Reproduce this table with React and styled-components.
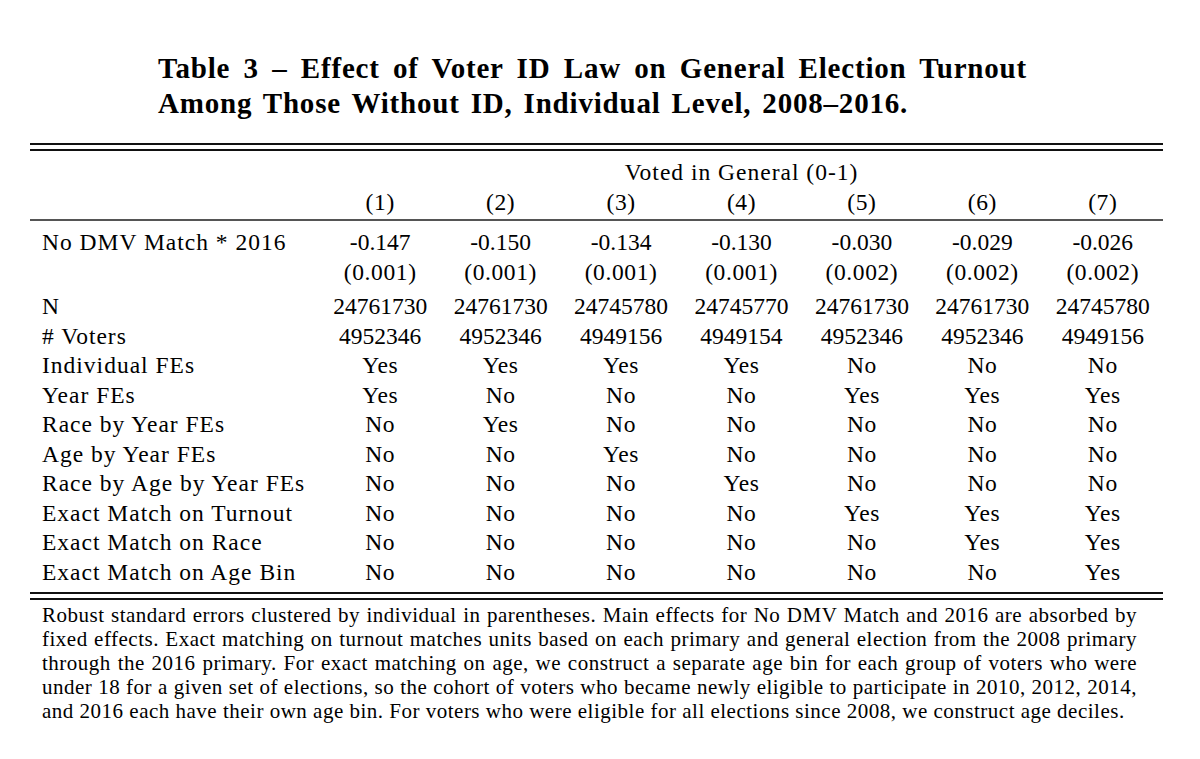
import React from 'react'
import styled, { createGlobalStyle } from 'styled-components'

const GlobalStyle = createGlobalStyle`
  html, body {
    margin: 0;
    padding: 0;
    background: #fff;
  }
  body {
    font-family: "Liberation Serif", "Times New Roman", serif;
    color: #000;
  }
`

const columns = ['(1)', '(2)', '(3)', '(4)', '(5)', '(6)', '(7)']

const coefs = ['-0.147', '-0.150', '-0.134', '-0.130', '-0.030', '-0.029', '-0.026']
const errors = ['(0.001)', '(0.001)', '(0.001)', '(0.001)', '(0.002)', '(0.002)', '(0.002)']

const stats = [
  { label: 'N', values: ['24761730', '24761730', '24745780', '24745770', '24761730', '24761730', '24745780'] },
  { label: '# Voters', values: ['4952346', '4952346', '4949156', '4949154', '4952346', '4952346', '4949156'] },
]

const Y = 'Yes'
const N = 'No'

const specs = [
  { label: 'Individual FEs', values: [Y, Y, Y, Y, N, N, N] },
  { label: 'Year FEs', values: [Y, N, N, N, Y, Y, Y] },
  { label: 'Race by Year FEs', values: [N, Y, N, N, N, N, N] },
  { label: 'Age by Year FEs', values: [N, N, Y, N, N, N, N] },
  { label: 'Race by Age by Year FEs', values: [N, N, N, Y, N, N, N] },
  { label: 'Exact Match on Turnout', values: [N, N, N, N, Y, Y, Y] },
  { label: 'Exact Match on Race', values: [N, N, N, N, N, Y, Y] },
  { label: 'Exact Match on Age Bin', values: [N, N, N, N, N, N, Y] },
]

const noteLines = [
  'Robust standard errors clustered by individual in parentheses. Main effects for No DMV Match and 2016 are absorbed by',
  'fixed effects. Exact matching on turnout matches units based on each primary and general election from the 2008 primary',
  'through the 2016 primary. For exact matching on age, we construct a separate age bin for each group of voters who were',
  'under 18 for a given set of elections, so the cohort of voters who became newly eligible to participate in 2010, 2012, 2014,',
  'and 2016 each have their own age bin. For voters who were eligible for all elections since 2008, we construct age deciles.',
]

const App = () => {
  return (
    <Page>
      <GlobalStyle />
      <Caption>
        <CaptionLine $justify>Table 3 – Effect of Voter ID Law on General Election Turnout</CaptionLine>
        <CaptionLine>Among Those Without ID, Individual Level, 2008–2016.</CaptionLine>
      </Caption>

      <Table>
        <DoubleRule />
        <Head>
          <Row>
            <Label />
            <SpanCell>Voted in General (0-1)</SpanCell>
          </Row>
          <Row>
            <Label />
            {columns.map((c) => (
              <Cell key={c}>{c}</Cell>
            ))}
          </Row>
        </Head>
        <MidRule />

        <Body>
          <Row>
            <Label>No DMV Match * 2016</Label>
            {coefs.map((v, i) => (
              <Cell key={i} $num>{v}</Cell>
            ))}
          </Row>
          <Row>
            <Label />
            {errors.map((v, i) => (
              <Cell key={i}>{v}</Cell>
            ))}
          </Row>
          <Spacer />
          {stats.concat(specs).map((row) => (
            <Row key={row.label}>
              <Label>{row.label}</Label>
              {row.values.map((v, i) => (
                <Cell key={i} $num={/\d/.test(v)}>{v}</Cell>
              ))}
            </Row>
          ))}
        </Body>

        <DoubleRule $bottom />

        <Note>
          {noteLines.map((line, i) => (
            <NoteLine key={i} $last={i === noteLines.length - 1}>{line}</NoteLine>
          ))}
        </Note>
      </Table>
    </Page>
  )
}

const Page = styled.main`
  width: 1200px;
  min-height: 759px;
  padding-top: 51px;
  box-sizing: border-box;
`

const Caption = styled.div`
  margin-left: 158px;
  width: 869px;
  font-weight: 700;
  font-size: 29px;
  line-height: 35px;
  letter-spacing: 0.8px;
  word-spacing: 3px;
`

const CaptionLine = styled.div`
  text-align: left;
  text-align-last: ${(p) => (p.$justify ? 'justify' : 'left')};
`

const Table = styled.section`
  margin-left: 30px;
  width: 1133px;
  margin-top: 22px;
`

const DoubleRule = styled.div`
  height: 4px;
  border-top: 2px solid #111;
  border-bottom: 2px solid #111;
  margin-top: ${(p) => (p.$bottom ? '5px' : '0')};
`

const MidRule = styled.div`
  height: 1.5px;
  background: #555;
`

const Head = styled.div`
  padding-top: 7px;
  padding-bottom: 2px;
`

const Body = styled.div`
  padding-top: 7.5px;
`

const Row = styled.div`
  display: grid;
  grid-template-columns: 290px repeat(7, 1fr);
  height: 29.5px;
  align-items: center;
  font-size: 23.5px;
  line-height: 29.5px;
`

const Label = styled.div`
  padding-left: 12px;
  letter-spacing: 1px;
  white-space: nowrap;
`

const Cell = styled.div`
  text-align: center;
  white-space: nowrap;
  letter-spacing: ${(p) => (p.$num ? '0' : '0.6px')};
`

const SpanCell = styled.div`
  grid-column: 2 / span 7;
  text-align: center;
  letter-spacing: 1px;
`

const Spacer = styled.div`
  height: 5px;
`

const Note = styled.div`
  padding: 3px 0 0 12px;
  width: 1095px;
  font-size: 21px;
  line-height: 24px;
  letter-spacing: 0.5px;
`

const NoteLine = styled.div`
  text-align: justify;
  text-align-last: ${(p) => (p.$last ? 'left' : 'justify')};
`

export default App
